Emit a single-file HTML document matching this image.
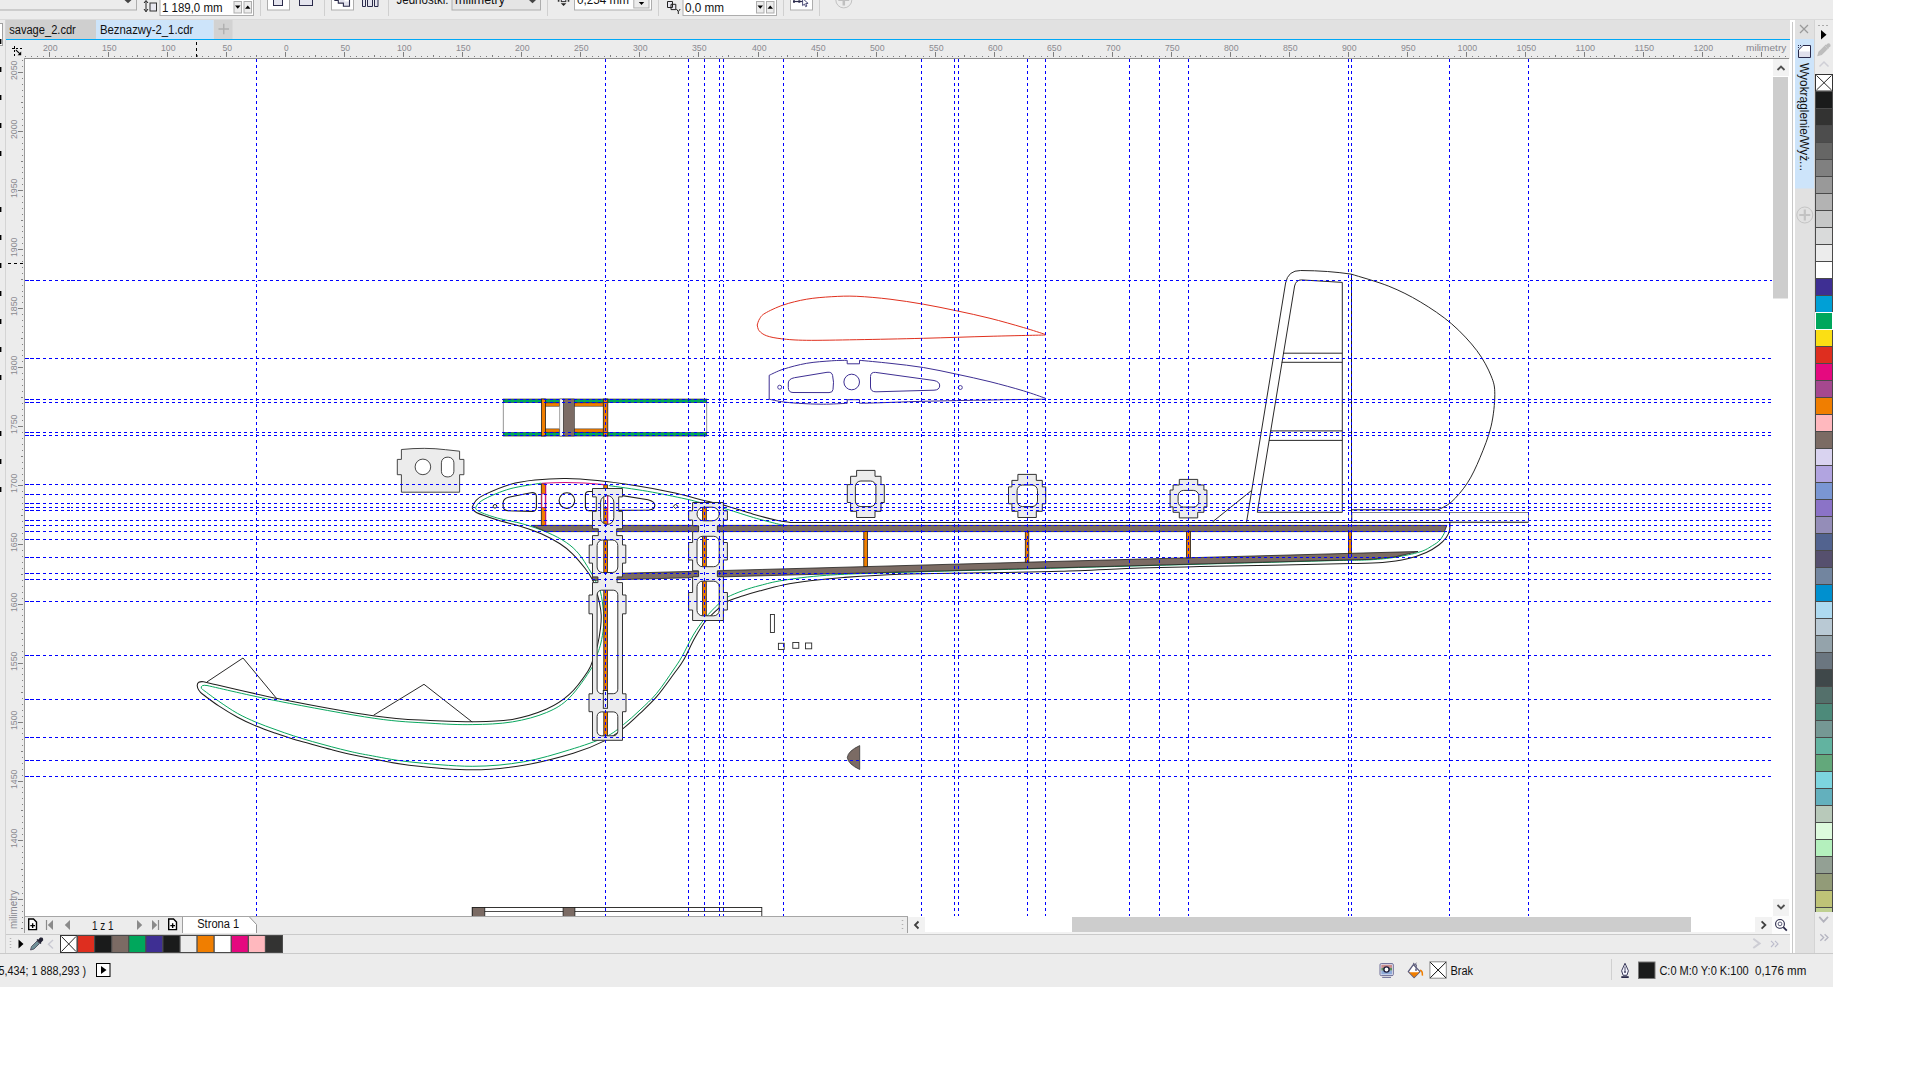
<!DOCTYPE html>
<html><head><meta charset="utf-8"><title>CorelDRAW</title>
<style>html,body{margin:0;padding:0;background:#fff;width:1920px;height:1080px;overflow:hidden}svg{display:block}text{font-family:"Liberation Sans",sans-serif}</style></head>
<body>
<svg width="1920" height="1080" viewBox="0 0 1920 1080" font-family="Liberation Sans, sans-serif">
<rect x="0" y="0" width="1833" height="987" fill="#ececec"/>
<rect x="25" y="59" width="1748" height="857" fill="#fff"/>
<svg x="25" y="59" width="1748" height="857" viewBox="25 59 1748 857" overflow="hidden">
<rect x="472.3" y="907.5" width="289.5" height="10.5" fill="#fff" stroke="#1f1e1d" stroke-width="0.9"/><path d="M472.3 911.5H761.8" stroke="#1f1e1d" stroke-width="0.8" fill="none"/><rect x="472.3" y="907.5" width="12.5" height="10.5" fill="#7b6b64" stroke="#1f1e1d" stroke-width="0.8"/><rect x="563.1" y="907.5" width="11.8" height="10.5" fill="#7b6b64" stroke="#1f1e1d" stroke-width="0.8"/><rect x="503.3" y="399" width="203.4" height="37" fill="#fff" stroke="#8a8a8a" stroke-width="0.9"/><rect x="503.3" y="399.2" width="203.4" height="3.5" fill="#00a75c" stroke="#1f1e1d" stroke-width="0.5"/><rect x="503.3" y="432.4" width="203.4" height="3.5" fill="#00a75c" stroke="#1f1e1d" stroke-width="0.5"/><rect x="545.5" y="402.9" width="14" height="3.3" fill="#f07e00" stroke="#1f1e1d" stroke-width="0.5"/><rect x="574.4" y="402.9" width="28.9" height="3.3" fill="#f07e00" stroke="#1f1e1d" stroke-width="0.5"/><rect x="545.5" y="428.9" width="14" height="3.3" fill="#f07e00" stroke="#1f1e1d" stroke-width="0.5"/><rect x="574.4" y="428.9" width="28.9" height="3.3" fill="#f07e00" stroke="#1f1e1d" stroke-width="0.5"/><rect x="541.5" y="399" width="4" height="37" fill="#f07e00" stroke="#1f1e1d" stroke-width="0.8"/><rect x="603.3" y="399" width="4.5" height="37" fill="#f07e00" stroke="#1f1e1d" stroke-width="0.8"/><rect x="559.8" y="399" width="3.5" height="37" fill="#f4f4f4" stroke="#555" stroke-width="0.5"/><rect x="563.3" y="399" width="11.1" height="37" fill="#7b6b64" stroke="#1f1e1d" stroke-width="0.5"/><path d="M401.4 449.5Q425 447.1 445.6 449.7L459.6 451.2V459.4H463.9V474.7H459.6V492.2H401.4V474.7H397.3V459.4H401.4ZM430.7 466.9A7.8 7.8 0 1 0 415.1 466.9A7.8 7.8 0 1 0 430.7 466.9ZM447 457.2H448.3A5.6 5.6 0 0 1 453.9 462.8V471.3A5.6 5.6 0 0 1 448.3 476.9H447A5.6 5.6 0 0 1 441.4 471.3V462.8A5.6 5.6 0 0 1 447 457.2Z" fill="#ececec" stroke="#333" stroke-width="0.9" fill-rule="evenodd" stroke-linejoin="miter"/><path d="M757.2 325C757.58 324 758.2 320.95 759.5 319C760.8 317.05 761.03 315.63 765 313.3C768.97 310.97 776.35 307.35 783.3 305C790.25 302.65 798.63 300.58 806.7 299.2C814.77 297.82 823.37 297.18 831.7 296.7C840.03 296.22 846.98 295.88 856.7 296.3C866.42 296.72 878.9 297.88 890 299.2C901.1 300.52 912.18 302.27 923.3 304.2C934.42 306.13 945.58 308.45 956.7 310.8C967.82 313.15 978.9 315.52 990 318.3C1001.1 321.08 1014.05 324.8 1023.3 327.5C1032.55 330.2 1041.8 333.33 1045.5 334.5L1045.5 335C1036.25 335.22 1010.37 335.75 990 336.3C969.63 336.85 945.52 337.73 923.3 338.3C901.08 338.87 876.13 339.37 856.7 339.7C837.27 340.03 819.2 340.45 806.7 340.3C794.2 340.15 788.37 339.55 781.7 338.8C775.03 338.05 770.45 337.13 766.7 335.8C762.95 334.47 760.78 332.6 759.2 330.8C757.62 329 757.53 325.97 757.2 325" fill="none" stroke="#e0301e" stroke-width="1"/><path d="M769.2 375.3C771.55 374.28 777.05 371.2 783.3 369.2C789.55 367.2 798.63 364.7 806.7 363.3C814.77 361.9 824.95 361.3 831.7 360.8C838.45 360.3 844.62 360.38 847.2 360.3V363.8H859.5V360.3C864.58 360.8 879.37 362.1 890 363.3C900.63 364.5 912.18 365.68 923.3 367.5C934.42 369.32 945.58 371.83 956.7 374.2C967.82 376.57 978.9 378.93 990 381.7C1001.1 384.47 1014.05 388.03 1023.3 390.8C1032.55 393.57 1041.8 397.05 1045.5 398.3L1045.5 399.2C1036.25 399.33 1010.37 399.65 990 400C969.63 400.35 942.75 400.8 923.3 401.3C903.85 401.8 883.93 402.67 873.3 403C862.67 403.33 861.8 403.25 859.5 403.3V399.7H847.2V403.3C843.22 403.45 831.45 404.2 823.3 404.2C815.15 404.2 805.23 403.72 798.3 403.3C791.37 402.88 786.55 402.38 781.7 401.7C776.85 401.02 771.28 399.62 769.2 399.2Z" fill="none" stroke="#3e2f93" stroke-width="1"/><path d="M781.7 387.2A2 2 0 1 0 777.7 387.2A2 2 0 1 0 781.7 387.2Z" fill="none" stroke="#3e2f93" stroke-width="0.9"/><path d="M962.3 387.5A2 2 0 1 0 958.3 387.5A2 2 0 1 0 962.3 387.5Z" fill="none" stroke="#3e2f93" stroke-width="0.9"/><path d="M859.5 382A7.8 7.8 0 1 0 843.9 382A7.8 7.8 0 1 0 859.5 382Z" fill="none" stroke="#3e2f93" stroke-width="1"/><path d="M794.5 377.7L827 372.3Q832 371.6 832.6 375.5Q834.2 382 833 389.5Q832.6 392.7 829 392.6L793 392.5Q788.3 392.4 788.3 387.5V383Q788.4 378.9 794.5 377.7Z" fill="none" stroke="#3e2f93" stroke-width="1"/><path d="M875.5 372.4L934 380.5Q940 381.8 939.7 386Q939.3 390 934 390.2L876 391.8Q870.6 391.9 870.5 387V376.5Q870.7 371.9 875.5 372.4Z" fill="none" stroke="#3e2f93" stroke-width="1"/><path d="M1246.6 521.8L1285.6 283Q1288 270.3 1300.7 270.5Q1329 270.7 1351.5 274.2C1357.72 276.2 1377.33 281.58 1388.8 286.2C1400.27 290.82 1409.82 295.62 1420.3 301.9C1430.78 308.18 1442.27 315.77 1451.7 323.9C1461.13 332.03 1470.33 342.03 1476.9 350.7C1483.47 359.37 1488.12 368.57 1491.1 375.9C1494.08 383.23 1494.8 386.32 1494.8 394.7C1494.8 403.08 1493.57 415.7 1491.1 426.2C1488.63 436.7 1483.93 448.27 1480 457.7C1476.07 467.13 1472.22 475.47 1467.5 482.8C1462.78 490.13 1456.6 497.2 1451.7 501.7C1446.8 506.2 1440.37 508.45 1438.1 509.8H1351.5" fill="none" stroke="#1f1e1d" stroke-width="0.95"/><path d="M1351.5 274.2V522.3" fill="none" stroke="#1f1e1d" stroke-width="1"/><path d="M1257.3 512.3L1294.6 286Q1296 279.8 1301.5 279.9L1342.3 282.4V512.3Z" fill="none" stroke="#1f1e1d" stroke-width="0.95"/><path d="M1283.2 353.2H1342.3M1281.7 362.3H1342.3M1270.5 430.9H1342.3M1269 440.4H1342.3" fill="none" stroke="#1f1e1d" stroke-width="0.95"/><path d="M1212.6 521.8L1251.3 490.7" fill="none" stroke="#1f1e1d" stroke-width="0.95"/><rect x="1351.9" y="512.5" width="176.6" height="9.7" fill="#fff" stroke="#666" stroke-width="0.8"/><path d="M1449.8 522.3H1528.5" fill="none" stroke="#2a2a2a" stroke-width="0.9"/><path d="M472.1 507.5C472.75 506.33 473.85 502.68 476 500.5C478.15 498.32 479.33 497.08 485 494.4C490.67 491.72 501.67 486.8 510 484.4C518.33 482 525.62 480.98 535 480C544.38 479.02 555.88 478.4 566.3 478.5C576.72 478.6 586.05 479.42 597.5 480.6C608.95 481.78 622.5 483.62 635 485.6C647.5 487.58 661.67 490.2 672.5 492.5C683.33 494.8 691.53 497.32 700 499.4C708.47 501.48 714.42 502.53 723.3 505C732.18 507.47 744.4 511.65 753.3 514.2C762.2 516.75 770.58 518.93 776.7 520.3C782.82 521.67 787.78 522.05 790 522.4H1449.8C1449.77 523.67 1450.18 527.48 1449.6 530C1449.02 532.52 1448.1 535 1446.3 537.5C1444.5 540 1442.13 542.5 1438.8 545C1435.47 547.5 1431.52 550.2 1426.3 552.5C1421.08 554.8 1414.8 557.13 1407.5 558.8C1400.2 560.47 1391.87 561.7 1382.5 562.5C1373.13 563.3 1356.5 563.42 1351.3 563.6C1326.08 564.1 1235.22 565.85 1200 566.6C1164.78 567.35 1163.33 567.32 1140 568.1C1116.67 568.88 1086.67 570.52 1060 571.3C1033.33 572.08 1006.67 572.32 980 572.8C953.33 573.28 922.78 573.42 900 574.2C877.22 574.98 858.3 576.4 843.3 577.5C828.3 578.6 820 579.55 810 580.8C800 582.05 791.63 583.33 783.3 585C774.97 586.67 766.67 589 760 590.8C753.33 592.6 748.85 593.98 743.3 595.8C737.75 597.62 731.42 599.05 726.7 601.7C721.98 604.35 718.62 608.37 715 611.7C711.38 615.03 708.4 617.27 705 621.7C701.6 626.13 698.17 631.92 694.6 638.3C691.03 644.68 686.98 654.17 683.6 660C680.22 665.83 678.78 667.18 674.3 673.3C669.82 679.42 662.42 690.03 656.7 696.7C650.98 703.37 645.57 708.03 640 713.3C634.43 718.57 629.13 723.75 623.3 728.3C617.47 732.85 613.33 736.43 605 740.6C596.67 744.77 586.85 749.2 573.3 753.3C559.75 757.4 540.55 762.45 523.7 765.2C506.85 767.95 491.3 769.8 472.2 769.8C453.1 769.8 426.35 767.17 409.1 765.2C391.85 763.23 378.55 759.83 368.7 758C358.85 756.17 356.25 755.62 350 754.2C343.75 752.78 337.45 751.13 331.2 749.5C324.95 747.87 318.75 746.12 312.5 744.4C306.25 742.68 299.95 741.08 293.7 739.2C287.45 737.32 281.25 735.28 275 733.1C268.75 730.92 262.45 728.75 256.2 726.1C249.95 723.45 243.75 720.57 237.5 717.2C231.25 713.83 224.45 709.68 218.7 705.9C212.95 702.12 205.62 696.4 203 694.5Q197.5 690.5 197.2 685.5Q197.3 681 203.5 681.7C216 684.53 249.95 693 278.5 698.7C307.05 704.4 349.55 712.25 374.8 715.9C400.05 719.55 413.77 719.63 430 720.6C446.23 721.57 458.48 721.9 472.2 721.7C485.92 721.5 499.9 721.5 512.3 719.4C524.7 717.3 537.05 713.3 546.6 709.1C556.15 704.9 562.72 700.52 569.6 694.2C576.48 687.88 583.92 677.23 587.9 671.2C591.88 665.17 591.88 662.37 593.5 658C595.12 653.63 596.43 650 597.6 645C598.77 640 599.9 633 600.5 628C601.1 623 601.37 619.17 601.2 615C601.03 610.83 600.37 607.17 599.5 603C598.63 598.83 597.18 593.92 596 590C594.82 586.08 594.23 583.12 592.4 579.5C590.57 575.88 588.32 572.58 585 568.3C581.68 564.02 576.67 557.88 572.5 553.8C568.33 549.72 565.2 547.13 560 543.8C554.8 540.47 547.55 536.62 541.3 533.8C535.05 530.98 529.8 529.2 522.5 526.9C515.2 524.6 505.2 522.4 497.5 520C489.8 517.6 480.53 514.58 476.3 512.5C472.07 510.42 472.8 508.33 472.1 507.5" fill="none" stroke="#1f1e1d" stroke-width="1.05"/><path d="M207 681.9L243 658L276.2 698" fill="none" stroke="#1f1e1d" stroke-width="0.95"/><path d="M373.6 715.2L424 684.3L472.2 722" fill="none" stroke="#1f1e1d" stroke-width="0.95"/><path d="M541.3 483.1C536.08 484.05 519.38 486.18 510 488.8C500.62 491.42 490.62 495.88 485 498.8C479.38 501.72 477.33 504.22 476.3 506.3C475.27 508.38 475.27 509.33 478.8 511.3C482.33 513.27 490.22 516.02 497.5 518.1C504.78 520.18 514.17 521.4 522.5 523.8C530.83 526.2 540.2 529.38 547.5 532.5C554.8 535.62 561.08 538.95 566.3 542.5C571.52 546.05 575.05 549.42 578.8 553.8C582.55 558.18 586.1 564.43 588.8 568.8C591.5 573.17 593.05 576.13 595 580C596.95 583.87 599.08 586.68 600.5 592C601.92 597.32 603 606 603.5 611.9C604 617.8 603.93 622.22 603.5 627.4C603.07 632.58 601.88 638.67 600.9 643C599.92 647.33 599.12 649.28 597.6 653.4C596.08 657.52 596.47 660.33 591.8 667.7C587.13 675.07 577.13 690.13 569.6 697.6C562.07 705.07 556.15 708.45 546.6 712.5C537.05 716.55 524.7 719.88 512.3 721.9C499.9 723.92 485.92 724.38 472.2 724.6C458.48 724.82 446.23 724.23 430 723.2C413.77 722.17 400.05 722.07 374.8 718.4C349.55 714.73 306.47 706.68 278.5 701.2C250.53 695.72 218.92 688.12 207 685.5Q200.5 684.5 201.3 688.3C201.7 688.63 200.8 688.15 203.7 690.3C206.6 692.45 213.07 697.35 218.7 701.2C224.33 705.05 231.25 709.88 237.5 713.4C243.75 716.92 249.95 719.63 256.2 722.3C262.45 724.97 268.75 727.13 275 729.4C281.25 731.67 287.45 733.87 293.7 735.9C299.95 737.93 306.25 739.8 312.5 741.6C318.75 743.4 324.95 745.07 331.2 746.7C337.45 748.33 343.75 749.98 350 751.4C356.25 752.82 358.85 753.47 368.7 755.2C378.55 756.93 391.85 759.95 409.1 761.8C426.35 763.65 453.1 766.3 472.2 766.3C491.3 766.3 507.47 764.55 523.7 761.8C539.93 759.05 556.05 753.9 569.6 749.8C583.15 745.7 596.05 741.37 605 737.2C613.95 733.03 617.47 729.33 623.3 724.8C629.13 720.27 634.43 715.25 640 710C645.57 704.75 651.15 699.97 656.7 693.3C662.25 686.63 669.08 676.13 673.3 670C677.52 663.87 678.67 662.33 682 656.5C685.33 650.67 689.47 641.37 693.3 635C697.13 628.63 700.83 623.43 705 618.3C709.17 613.17 714.68 607.67 718.3 604.2C721.92 600.73 722.53 599.78 726.7 597.5C730.87 595.22 737.75 592.5 743.3 590.5C748.85 588.5 753.33 587.2 760 585.5C766.67 583.8 772.18 582 783.3 580.3C794.42 578.6 807.25 576.62 826.7 575.3C846.15 573.98 861.12 573.62 900 572.4C938.88 571.18 1010 569.37 1060 568C1110 566.63 1155 565.42 1200 564.2C1245 562.98 1301.67 561.43 1330 560.7C1358.33 559.97 1359.17 560.37 1370 559.8C1380.83 559.23 1386.67 558.62 1395 557.3C1403.33 555.98 1413.75 553.85 1420 551.9C1426.25 549.95 1429.17 547.58 1432.5 545.6C1435.83 543.62 1437.92 542.28 1440 540C1442.08 537.72 1444.17 533.25 1445 531.9" fill="none" stroke="#0aa75f" stroke-width="1"/><path d="M608.8 485.6C615.25 486.55 634.8 489.1 647.5 491.3C660.2 493.5 676.25 496.93 685 498.8C693.75 500.67 693.05 500.77 700 502.5C706.95 504.23 717.82 506.7 726.7 509.2C735.58 511.7 744.97 515.08 753.3 517.5C761.63 519.92 771.7 522.45 776.7 523.7C781.7 524.95 782.2 524.78 783.3 525" fill="none" stroke="#0aa75f" stroke-width="1"/><path d="M496.8 506.3A1.8 1.8 0 1 0 493.2 506.3A1.8 1.8 0 1 0 496.8 506.3Z" fill="none" stroke="#1f1e1d" stroke-width="0.95"/><path d="M675.6 504.1L677.8 506.3L675.6 508.5L673.4 506.3Z" fill="none" stroke="#1f1e1d" stroke-width="0.95"/><path d="M508.5 497.3L531 492.7Q536 492 536.4 496V507Q536.2 511.6 532 511.4L508 510.8Q503.1 510.5 503.1 505.5V503Q503.3 498.6 508.5 497.3Z" fill="none" stroke="#1f1e1d" stroke-width="1.1"/><path d="M574.7 500.6A7.8 7.8 0 1 0 559.1 500.6A7.8 7.8 0 1 0 574.7 500.6Z" fill="none" stroke="#1f1e1d" stroke-width="1.1"/><path d="M588.9 491.5H596.5A3.5 3.5 0 0 1 600 495V507.1A3.5 3.5 0 0 1 596.5 510.6H588.9A3.5 3.5 0 0 1 585.4 507.1V495A3.5 3.5 0 0 1 588.9 491.5Z" fill="none" stroke="#1f1e1d" stroke-width="1.1"/><path d="M616 494.6L648 499.7Q654.8 501.3 654.8 505.3Q654.6 509.8 649 510L616 510.4" fill="none" stroke="#1f1e1d" stroke-width="1.1"/><path d="M531.3 525.4L1446.9 525.4L1444.4 531.6L546.3 531.6Z" fill="#7b6b64" stroke="#1f1e1d" stroke-width="0.8"/><path d="M592.5 574.08L1320 554.18L1380 552.54L1418 551.5L1395 556.9L1370 559.4L1320 560.7L592.5 580.37Z" fill="#7b6b64" stroke="#1f1e1d" stroke-width="0.8"/><rect x="541.3" y="483.8" width="4.3" height="41.5" fill="#f07e00" stroke="#1f1e1d" stroke-width="0.8"/><rect x="541.8" y="493.8" width="3.5" height="13.8" fill="#fff" stroke="#c2185b" stroke-width="0.9"/><rect x="603.8" y="484.8" width="3.7" height="251.2" fill="#f07e00" stroke="#1f1e1d" stroke-width="0.8"/><rect x="604.4" y="495" width="2.8" height="12.5" fill="#fff" stroke="none" stroke-width="0"/><rect x="702.5" y="506" width="3.8" height="110.5" fill="#f07e00" stroke="#1f1e1d" stroke-width="0.8"/><rect x="863.8" y="531.6" width="3.7" height="35.01" fill="#f07e00" stroke="#1f1e1d" stroke-width="0.8"/><rect x="1025.3" y="531.6" width="3.5" height="30.6" fill="#f07e00" stroke="#1f1e1d" stroke-width="0.8"/><rect x="1186.5" y="531.6" width="4.1" height="26.18" fill="#f07e00" stroke="#1f1e1d" stroke-width="0.8"/><rect x="1348.5" y="531.6" width="3" height="21.76" fill="#f07e00" stroke="#1f1e1d" stroke-width="0.8"/><path d="M541.9 483.3Q572.5 481.2 603.8 484.6" fill="none" stroke="#d4147a" stroke-width="1.1"/><path d="M545.7 483.3V525.2M607.7 495V525" fill="none" stroke="#d4147a" stroke-width="1.1"/><path d="M622.5 488.5L622.5 496.9L618.7 496.9L618.7 511.3L622.5 511.3L622.5 528.8L616.7 528.8L616.7 535.6L622.5 535.6L622.5 545L625.8 545L625.8 563.1L622.5 563.1L622.5 576.9L617.1 576.9L617.1 582.6L622.5 582.6L622.5 595L626 595L626 613.8L622.5 613.8L622.5 693.8L626 693.8L626 711.7L622.5 711.7L622.5 740.3L592.5 740.3L592.5 711.7L589 711.7L589 693.8L592.5 693.8L592.5 613.8L589 613.8L589 595L592.5 595L592.5 582.6L597.9 582.6L597.9 576.9L592.5 576.9L592.5 563.1L589.2 563.1L589.2 545L592.5 545L592.5 535.6L598.3 535.6L598.3 528.8L592.5 528.8L592.5 511.3L596.3 511.3L596.3 496.9L592.5 496.9L592.5 488.5ZM607.2 495.6H607.2A6.6 6.6 0 0 1 613.8 502.2V517.8A6.6 6.6 0 0 1 607.2 524.4H607.2A6.6 6.6 0 0 1 600.6 517.8V502.2A6.6 6.6 0 0 1 607.2 495.6ZM602.6 540H612.3A5.5 5.5 0 0 1 617.8 545.5V567A5.5 5.5 0 0 1 612.3 572.5H602.6A5.5 5.5 0 0 1 597.1 567V545.5A5.5 5.5 0 0 1 602.6 540ZM601.6 590.2H613.3A4.5 4.5 0 0 1 617.8 594.7V689.2A4.5 4.5 0 0 1 613.3 693.7H601.6A4.5 4.5 0 0 1 597.1 689.2V594.7A4.5 4.5 0 0 1 601.6 590.2ZM601.6 711.9H613.3A4.5 4.5 0 0 1 617.8 716.4V731.3A4.5 4.5 0 0 1 613.3 735.8H601.6A4.5 4.5 0 0 1 597.1 731.3V716.4A4.5 4.5 0 0 1 601.6 711.9Z" fill="#ececec" stroke="#333" stroke-width="1" fill-rule="evenodd"/><rect x="603.3" y="690.5" width="4.2" height="17.8" fill="#ececec" stroke="#222" stroke-width="0.9"/><path d="M723.4 502.5L723.4 510.8L727.4 510.8L727.4 520L723.4 520L723.4 525.8L717.4 525.8L717.4 531.7L723.4 531.7L723.4 542.5L727.4 542.5L727.4 560L723.4 560L723.4 570.8L717.4 570.8L717.4 576.7L723.4 576.7L723.4 592.5L727.4 592.5L727.4 610L723.4 610L723.4 620.5L692.6 620.5L692.6 610L688.6 610L688.6 592.5L692.6 592.5L692.6 576.7L698.6 576.7L698.6 570.8L692.6 570.8L692.6 560L688.6 560L688.6 542.5L692.6 542.5L692.6 531.7L698.6 531.7L698.6 525.8L692.6 525.8L692.6 520L688.6 520L688.6 510.8L692.6 510.8L692.6 502.5ZM703.8 507.2H712.4A6.8 6.8 0 0 1 719.2 514V514A6.8 6.8 0 0 1 712.4 520.8H703.8A6.8 6.8 0 0 1 697 514V514A6.8 6.8 0 0 1 703.8 507.2ZM702.5 536.3H713.7A5.5 5.5 0 0 1 719.2 541.8V561.2A5.5 5.5 0 0 1 713.7 566.7H702.5A5.5 5.5 0 0 1 697 561.2V541.8A5.5 5.5 0 0 1 702.5 536.3ZM702.5 581.2H713.7A5.5 5.5 0 0 1 719.2 586.7V610.3A5.5 5.5 0 0 1 713.7 615.8H702.5A5.5 5.5 0 0 1 697 610.3V586.7A5.5 5.5 0 0 1 702.5 581.2Z" fill="#ececec" stroke="#333" stroke-width="1" fill-rule="evenodd"/><path d="M875 470.4L875 476.3L881 476.3L881 484.6L884.3 484.6L884.3 502.5L881 502.5L881 511.3L875 511.3L875 517.5L856.6 517.5L856.6 511.3L850.6 511.3L850.6 502.5L847.3 502.5L847.3 484.6L850.6 484.6L850.6 476.3L856.6 476.3L856.6 470.4ZM860.9 481H870.4A5.5 5.5 0 0 1 875.9 486.5V501.1A5.5 5.5 0 0 1 870.4 506.6H860.9A5.5 5.5 0 0 1 855.4 501.1V486.5A5.5 5.5 0 0 1 860.9 481Z" fill="#ececec" stroke="#333" stroke-width="1" fill-rule="evenodd"/><path d="M1036.3 474.4L1036.3 480.4L1042.3 480.4L1042.3 486.9L1045.7 486.9L1045.7 503.8L1042.3 503.8L1042.3 511.3L1036.3 511.3L1036.3 517.5L1017.9 517.5L1017.9 511.3L1011.9 511.3L1011.9 503.8L1008.5 503.8L1008.5 486.9L1011.9 486.9L1011.9 480.4L1017.9 480.4L1017.9 474.4ZM1022.6 485H1032A5.5 5.5 0 0 1 1037.5 490.5V501.1A5.5 5.5 0 0 1 1032 506.6H1022.6A5.5 5.5 0 0 1 1017.1 501.1V490.5A5.5 5.5 0 0 1 1022.6 485Z" fill="#ececec" stroke="#333" stroke-width="1" fill-rule="evenodd"/><path d="M1197.7 479.4L1197.7 485L1203.9 485L1203.9 490L1206.9 490L1206.9 506.9L1203.9 506.9L1203.9 512.3L1197.7 512.3L1197.7 517.9L1179.3 517.9L1179.3 512.3L1173.1 512.3L1173.1 506.9L1170.1 506.9L1170.1 490L1173.1 490L1173.1 485L1179.3 485L1179.3 479.4ZM1183.6 490.4H1193.3A5.5 5.5 0 0 1 1198.8 495.9V501.6A5.5 5.5 0 0 1 1193.3 507.1H1183.6A5.5 5.5 0 0 1 1178.1 501.6V495.9A5.5 5.5 0 0 1 1183.6 490.4Z" fill="#ececec" stroke="#333" stroke-width="1" fill-rule="evenodd"/><rect x="770.4" y="614.5" width="4" height="18" fill="#fff" stroke="#2a2a2a" stroke-width="0.9"/><rect x="778.4" y="643.3" width="5.8" height="6.2" fill="#fff" stroke="#2a2a2a" stroke-width="0.9"/><rect x="792.8" y="642.5" width="6" height="5.8" fill="#fff" stroke="#2a2a2a" stroke-width="0.9"/><rect x="805.5" y="643" width="6.2" height="5.8" fill="#fff" stroke="#2a2a2a" stroke-width="0.9"/><path d="M859.7 745.6V769.5Q848 764 847.3 757.5Q848 751 859.7 745.6Z" fill="#7b6b64" stroke="#333" stroke-width="0.8"/>
<g stroke="#0000ff" stroke-width="1" shape-rendering="crispEdges" fill="none"><path d="M256.5 59V281M256.5 284V916M605.5 59V281M605.5 284V916M688.5 59V281M688.5 284V916M704.5 59V281M704.5 284V916M719.5 59V281M719.5 284V916M723.5 59V281M723.5 284V916M783.5 59V281M783.5 284V916M921.5 59V281M921.5 284V916M954.5 59V281M954.5 284V916M958.5 59V281M958.5 284V916M1027.5 59V281M1027.5 284V916M1045.5 59V281M1045.5 284V916M1129.5 59V281M1129.5 284V916M1159.5 59V281M1159.5 284V916M1188.5 59V281M1188.5 284V916M1348.5 59V281M1348.5 284V916M1351.5 59V281M1351.5 284V916M1449.5 59V281M1449.5 284V916M1528.5 59V281M1528.5 284V916" stroke-dasharray="3 3"/><path d="M256.5 281v1M605.5 281v1M688.5 281v1M704.5 281v1M719.5 281v1M723.5 281v1M783.5 281v1M921.5 281v1M954.5 281v1M958.5 281v1M1027.5 281v1M1045.5 281v1M1129.5 281v1M1159.5 281v1M1188.5 281v1M1348.5 281v1M1351.5 281v1M1449.5 281v1M1528.5 281v1"/><path d="M84 280.5H1772M76 358.5H1772M76 399.5H1772M76 402.5H1772M76 432.5H1772M76 435.5H1772M76 484.5H1772M76 494.5H1772M76 503.5H1772M76 507.5H1772M76 510.5H1772M76 520.5H1772M76 525.5H1772M76 531.5H1772M76 539.5H1772M76 557.5H1772M76 573.5H1772M76 579.5H1772M76 601.5H1772M76 655.5H1772M76 699.5H1772M76 737.5H1772M76 760.5H1772M76 776.5H1772" stroke-dasharray="3 3"/><path d="M25 280.5h4m1 0h4m2 0h4m3 0h3m3 0h3m3 0h3m3 0h3m3 0h3m1 0h4m2 0h4M25 358.5h4m1 0h4m2 0h4m3 0h3m3 0h3m3 0h3m3 0h3m3 0h3m1 0h2M25 399.5h4m1 0h4m2 0h4m3 0h3m3 0h3m3 0h3m3 0h3m3 0h3m1 0h2M25 402.5h4m1 0h4m2 0h4m3 0h3m3 0h3m3 0h3m3 0h3m3 0h3m1 0h2M25 432.5h4m1 0h4m2 0h4m3 0h3m3 0h3m3 0h3m3 0h3m3 0h3m1 0h2M25 435.5h4m1 0h4m2 0h4m3 0h3m3 0h3m3 0h3m3 0h3m3 0h3m1 0h2M25 484.5h4m1 0h4m2 0h4m3 0h3m3 0h3m3 0h3m3 0h3m3 0h3m1 0h2M25 494.5h4m1 0h4m2 0h4m3 0h3m3 0h3m3 0h3m3 0h3m3 0h3m1 0h2M25 503.5h4m1 0h4m2 0h4m3 0h3m3 0h3m3 0h3m3 0h3m3 0h3m1 0h2M25 507.5h4m1 0h4m2 0h4m3 0h3m3 0h3m3 0h3m3 0h3m3 0h3m1 0h2M25 510.5h4m1 0h4m2 0h4m3 0h3m3 0h3m3 0h3m3 0h3m3 0h3m1 0h2M25 520.5h4m1 0h4m2 0h4m3 0h3m3 0h3m3 0h3m3 0h3m3 0h3m1 0h2M25 525.5h4m1 0h4m2 0h4m3 0h3m3 0h3m3 0h3m3 0h3m3 0h3m1 0h2M25 531.5h4m1 0h4m2 0h4m3 0h3m3 0h3m3 0h3m3 0h3m3 0h3m1 0h2M25 539.5h4m1 0h4m2 0h4m3 0h3m3 0h3m3 0h3m3 0h3m3 0h3m1 0h2M25 557.5h4m1 0h4m2 0h4m3 0h3m3 0h3m3 0h3m3 0h3m3 0h3m1 0h2M25 573.5h4m1 0h4m2 0h4m3 0h3m3 0h3m3 0h3m3 0h3m3 0h3m1 0h2M25 579.5h4m1 0h4m2 0h4m3 0h3m3 0h3m3 0h3m3 0h3m3 0h3m1 0h2M25 601.5h4m1 0h4m2 0h4m3 0h3m3 0h3m3 0h3m3 0h3m3 0h3m1 0h2M25 655.5h4m1 0h4m2 0h4m3 0h3m3 0h3m3 0h3m3 0h3m3 0h3m1 0h2M25 699.5h4m1 0h4m2 0h4m3 0h3m3 0h3m3 0h3m3 0h3m3 0h3m1 0h2M25 737.5h4m1 0h4m2 0h4m3 0h3m3 0h3m3 0h3m3 0h3m3 0h3m1 0h2M25 760.5h4m1 0h4m2 0h4m3 0h3m3 0h3m3 0h3m3 0h3m3 0h3m1 0h2M25 776.5h4m1 0h4m2 0h4m3 0h3m3 0h3m3 0h3m3 0h3m3 0h3m1 0h2"/></g>
</svg>
<path d="M24.5 58V933" stroke="#9a9a9a" stroke-width="1" shape-rendering="crispEdges"/>
<path d="M24 58.5H1789" stroke="#8e8e8e" stroke-width="1" shape-rendering="crispEdges"/>
<rect x="0" y="19" width="1833" height="20" fill="#e1e1e1"/><path d="M0 19.5H1833" stroke="#dadada" stroke-width="1" shape-rendering="crispEdges"/><rect x="6" y="20" width="90" height="19" fill="#cfcfcf"/><rect x="96" y="20" width="117.5" height="19" fill="#cde4fa"/><rect x="214" y="20" width="18.5" height="19" fill="#d2d2d2"/><text x="9.2" y="33.5" font-size="12" fill="#111" textLength="66.6" lengthAdjust="spacingAndGlyphs">savage_2.cdr</text><text x="100" y="33.5" font-size="12" fill="#111" textLength="93.3" lengthAdjust="spacingAndGlyphs">Beznazwy-2_1.cdr</text><path d="M218.5 29H229M223.75 23.8V34.2" stroke="#b0b0b0" stroke-width="1.4"/><path d="M6 39.5H1790" stroke="#00a8f6" stroke-width="1" shape-rendering="crispEdges"/>
<rect x="-1.5" y="-4.5" width="138" height="14.5" fill="#ececec" stroke="#adadad" stroke-width="1"/><path d="M124.5 0H131.5L128 3.3Z" fill="#444"/><path d="M146 1V11.5M144 9L146 11.8L148 9M144 3L146 0.5L148 3" stroke="#222" stroke-width="1" fill="none"/><rect x="150" y="3" width="6.5" height="8" fill="#e8e8f0" stroke="#333" stroke-width="1"/><rect x="160" y="-4.5" width="93.5" height="20" fill="#fff" stroke="#adadad" stroke-width="1"/><text x="162" y="12" font-size="12.5" fill="#111" textLength="60.5" lengthAdjust="spacingAndGlyphs">1 189,0 mm</text><rect x="234" y="1.5" width="7.5" height="11.5" fill="#ececec" stroke="#adadad" stroke-width="1"/><rect x="244" y="1.5" width="7.5" height="11.5" fill="#ececec" stroke="#adadad" stroke-width="1"/><path d="M235 5.5H240.5L237.75 8.7Z" fill="#000"/><path d="M245 8.7H250.5L247.75 5.5Z" fill="#000"/><path d="M260.5 0V16" stroke="#d0d0d0" stroke-width="1" shape-rendering="crispEdges"/><rect x="267.5" y="-4.5" width="22" height="14.5" fill="#fff" stroke="#adadad" stroke-width="1"/><rect x="273.5" y="-4.5" width="9" height="10" fill="#e4e4ee" stroke="#2a2a4a" stroke-width="1"/><rect x="299.5" y="-4.5" width="13" height="10" fill="#e4e4ee" stroke="#2a2a4a" stroke-width="1"/><path d="M324.5 0V16" stroke="#d0d0d0" stroke-width="1" shape-rendering="crispEdges"/><rect x="331.5" y="-4.5" width="22" height="14.5" fill="#fff" stroke="#adadad" stroke-width="1"/><rect x="344" y="1.5" width="5" height="4.5" fill="#e0e0ec"/><rect x="339.5" y="-1" width="5" height="3.5" fill="#e0e0ec"/><path d="M334.3 0.4H338.3V3.1H343.4V6.3H349.5V-1" stroke="#2a2a4a" stroke-width="1.1" fill="none"/><path d="M362.5 0V6.5H365.5V0M367.5 0V6.5H372.5V0M374.5 0V6.5H378V0" stroke="#2a2a4a" stroke-width="1" fill="#e4e4ee"/><path d="M388.5 0V16" stroke="#d0d0d0" stroke-width="1" shape-rendering="crispEdges"/><text x="396.5" y="3.7" font-size="12.5" fill="#111" textLength="52" lengthAdjust="spacingAndGlyphs">Jednostki:</text><rect x="452" y="-4.5" width="88.5" height="14.5" fill="#e5e5e5" stroke="#adadad" stroke-width="1"/><text x="455" y="3.7" font-size="12.5" fill="#111" textLength="50" lengthAdjust="spacingAndGlyphs">milimetry</text><path d="M529 0H536L532.5 3.3Z" fill="#444"/><path d="M547.5 0V16" stroke="#d0d0d0" stroke-width="1" shape-rendering="crispEdges"/><path d="M560.8 3.3H566.3L563.55 6Z" fill="#222"/><rect x="561.3" y="-3" width="4.5" height="4.6" fill="#e8e8f0" stroke="#333" stroke-width="1"/><path d="M558.6 0V1.8M568.5 0V1.8" stroke="#333" stroke-width="1.6"/><rect x="574.5" y="-4.5" width="77" height="14.5" fill="#fff" stroke="#adadad" stroke-width="1"/><text x="577" y="3.7" font-size="12.5" fill="#111" textLength="52" lengthAdjust="spacingAndGlyphs">0,254 mm</text><rect x="633.8" y="-4.5" width="15.2" height="12.5" fill="#ececec" stroke="#adadad" stroke-width="1"/><path d="M638.8 2.1H644.2L641.5 5.1Z" fill="#000"/><path d="M658.5 0V16" stroke="#d0d0d0" stroke-width="1" shape-rendering="crispEdges"/><path d="M667.5 1.5H672.5V7.5H667.5ZM671 4.3H675.8V9.6H671Z" fill="#e8e8f0" stroke="#222" stroke-width="1"/><path d="M676.4 9L678.3 11.6L680.2 9M678.3 11.6V14" stroke="#222" stroke-width="1" fill="none"/><rect x="683" y="-4.5" width="93.5" height="20" fill="#fff" stroke="#adadad" stroke-width="1"/><text x="685" y="12" font-size="12.5" fill="#111" textLength="39" lengthAdjust="spacingAndGlyphs">0,0 mm</text><rect x="756.5" y="1.5" width="7.5" height="11.5" fill="#ececec" stroke="#adadad" stroke-width="1"/><rect x="766.5" y="1.5" width="7.5" height="11.5" fill="#ececec" stroke="#adadad" stroke-width="1"/><path d="M757.5 5.5H763L760.25 8.7Z" fill="#000"/><path d="M767.5 8.7H773L770.25 5.5Z" fill="#000"/><path d="M783.5 0V16" stroke="#d0d0d0" stroke-width="1" shape-rendering="crispEdges"/><rect x="790.5" y="-4.5" width="22" height="14.5" fill="#fff" stroke="#adadad" stroke-width="1"/><path d="M793.5 1.5H803" stroke="#2a2a4a" stroke-width="1.2"/><rect x="793" y="0.3" width="2" height="2.4" fill="#2a2a4a"/><rect x="798.3" y="0.3" width="2" height="2.4" fill="#2a2a4a"/><path d="M802.6 -1.5V5.6L804.4 4.1L805.7 6.7L806.9 6.1L805.7 3.6L808.1 3.4Z" fill="#fff" stroke="#3a3a6a" stroke-width="0.9"/><path d="M819.5 0V16" stroke="#d0d0d0" stroke-width="1" shape-rendering="crispEdges"/><circle cx="843.8" cy="-0.1" r="8" fill="none" stroke="#c2c2c2" stroke-width="1"/><path d="M843.8 -6V5.4M838.3 -0.3H849.2" stroke="#c0c0c0" stroke-width="2.5"/>
<path d="M49.5 52V57M108.5 52V57M167.5 52V57M226.5 52V57M285.5 52V57M344.5 52V57M403.5 52V57M462.5 52V57M521.5 52V57M580.5 52V57M639.5 52V57M698.5 52V57M758.5 52V57M817.5 52V57M876.5 52V57M935.5 52V57M994.5 52V57M1053.5 52V57M1112.5 52V57M1171.5 52V57M1230.5 52V57M1289.5 52V57M1348.5 52V57M1407.5 52V57M1466.5 52V57M1525.5 52V57M1584.5 52V57M1643.5 52V57M1702.5 52V57M1761.5 52V57M78.5 55V57M137.5 55V57M197.5 55V57M256.5 55V57M315.5 55V57M374.5 55V57M433.5 55V57M492.5 55V57M551.5 55V57M610.5 55V57M669.5 55V57M728.5 55V57M787.5 55V57M846.5 55V57M905.5 55V57M964.5 55V57M1023.5 55V57M1082.5 55V57M1141.5 55V57M1200.5 55V57M1260.5 55V57M1319.5 55V57M1378.5 55V57M1437.5 55V57M1496.5 55V57M1555.5 55V57M1614.5 55V57M1673.5 55V57M1732.5 55V57M25.5 56V57M31.5 56V57M37.5 56V57M43.5 56V57M55.5 56V57M61.5 56V57M67.5 56V57M73.5 56V57M84.5 56V57M90.5 56V57M96.5 56V57M102.5 56V57M114.5 56V57M120.5 56V57M126.5 56V57M132.5 56V57M143.5 56V57M149.5 56V57M155.5 56V57M161.5 56V57M173.5 56V57M179.5 56V57M185.5 56V57M191.5 56V57M202.5 56V57M208.5 56V57M214.5 56V57M220.5 56V57M232.5 56V57M238.5 56V57M244.5 56V57M250.5 56V57M261.5 56V57M267.5 56V57M273.5 56V57M279.5 56V57M291.5 56V57M297.5 56V57M303.5 56V57M309.5 56V57M321.5 56V57M326.5 56V57M332.5 56V57M338.5 56V57M350.5 56V57M356.5 56V57M362.5 56V57M368.5 56V57M380.5 56V57M385.5 56V57M391.5 56V57M397.5 56V57M409.5 56V57M415.5 56V57M421.5 56V57M427.5 56V57M439.5 56V57M445.5 56V57M450.5 56V57M456.5 56V57M468.5 56V57M474.5 56V57M480.5 56V57M486.5 56V57M498.5 56V57M504.5 56V57M510.5 56V57M515.5 56V57M527.5 56V57M533.5 56V57M539.5 56V57M545.5 56V57M557.5 56V57M563.5 56V57M569.5 56V57M574.5 56V57M586.5 56V57M592.5 56V57M598.5 56V57M604.5 56V57M616.5 56V57M622.5 56V57M628.5 56V57M634.5 56V57M645.5 56V57M651.5 56V57M657.5 56V57M663.5 56V57M675.5 56V57M681.5 56V57M687.5 56V57M693.5 56V57M704.5 56V57M710.5 56V57M716.5 56V57M722.5 56V57M734.5 56V57M740.5 56V57M746.5 56V57M752.5 56V57M763.5 56V57M769.5 56V57M775.5 56V57M781.5 56V57M793.5 56V57M799.5 56V57M805.5 56V57M811.5 56V57M823.5 56V57M828.5 56V57M834.5 56V57M840.5 56V57M852.5 56V57M858.5 56V57M864.5 56V57M870.5 56V57M882.5 56V57M887.5 56V57M893.5 56V57M899.5 56V57M911.5 56V57M917.5 56V57M923.5 56V57M929.5 56V57M941.5 56V57M947.5 56V57M952.5 56V57M958.5 56V57M970.5 56V57M976.5 56V57M982.5 56V57M988.5 56V57M1000.5 56V57M1006.5 56V57M1011.5 56V57M1017.5 56V57M1029.5 56V57M1035.5 56V57M1041.5 56V57M1047.5 56V57M1059.5 56V57M1065.5 56V57M1071.5 56V57M1076.5 56V57M1088.5 56V57M1094.5 56V57M1100.5 56V57M1106.5 56V57M1118.5 56V57M1124.5 56V57M1130.5 56V57M1135.5 56V57M1147.5 56V57M1153.5 56V57M1159.5 56V57M1165.5 56V57M1177.5 56V57M1183.5 56V57M1189.5 56V57M1195.5 56V57M1206.5 56V57M1212.5 56V57M1218.5 56V57M1224.5 56V57M1236.5 56V57M1242.5 56V57M1248.5 56V57M1254.5 56V57M1265.5 56V57M1271.5 56V57M1277.5 56V57M1283.5 56V57M1295.5 56V57M1301.5 56V57M1307.5 56V57M1313.5 56V57M1324.5 56V57M1330.5 56V57M1336.5 56V57M1342.5 56V57M1354.5 56V57M1360.5 56V57M1366.5 56V57M1372.5 56V57M1384.5 56V57M1389.5 56V57M1395.5 56V57M1401.5 56V57M1413.5 56V57M1419.5 56V57M1425.5 56V57M1431.5 56V57M1443.5 56V57M1448.5 56V57M1454.5 56V57M1460.5 56V57M1472.5 56V57M1478.5 56V57M1484.5 56V57M1490.5 56V57M1502.5 56V57M1508.5 56V57M1513.5 56V57M1519.5 56V57M1531.5 56V57M1537.5 56V57M1543.5 56V57M1549.5 56V57M1561.5 56V57M1567.5 56V57M1573.5 56V57M1578.5 56V57M1590.5 56V57M1596.5 56V57M1602.5 56V57M1608.5 56V57M1620.5 56V57M1626.5 56V57M1632.5 56V57M1637.5 56V57M1649.5 56V57M1655.5 56V57M1661.5 56V57M1667.5 56V57M1679.5 56V57M1685.5 56V57M1691.5 56V57M1697.5 56V57M1708.5 56V57M1714.5 56V57M1720.5 56V57M1726.5 56V57M1738.5 56V57M1744.5 56V57M1750.5 56V57M1756.5 56V57M1767.5 56V57M1773.5 56V57M1779.5 56V57M1785.5 56V57" stroke="#7f7f7f" stroke-width="1" fill="none" shape-rendering="crispEdges"/><text x="50.3" y="50.9" font-size="9.6" fill="#8a8a90" textLength="14.6" lengthAdjust="spacingAndGlyphs" text-anchor="middle">200</text><text x="109.3" y="50.9" font-size="9.6" fill="#8a8a90" textLength="14.6" lengthAdjust="spacingAndGlyphs" text-anchor="middle">150</text><text x="168.3" y="50.9" font-size="9.6" fill="#8a8a90" textLength="14.6" lengthAdjust="spacingAndGlyphs" text-anchor="middle">100</text><text x="227.3" y="50.9" font-size="9.6" fill="#8a8a90" textLength="9.6" lengthAdjust="spacingAndGlyphs" text-anchor="middle">50</text><text x="286.3" y="50.9" font-size="9.6" fill="#8a8a90" textLength="4.6" lengthAdjust="spacingAndGlyphs" text-anchor="middle">0</text><text x="345.3" y="50.9" font-size="9.6" fill="#8a8a90" textLength="9.6" lengthAdjust="spacingAndGlyphs" text-anchor="middle">50</text><text x="404.3" y="50.9" font-size="9.6" fill="#8a8a90" textLength="14.6" lengthAdjust="spacingAndGlyphs" text-anchor="middle">100</text><text x="463.3" y="50.9" font-size="9.6" fill="#8a8a90" textLength="14.6" lengthAdjust="spacingAndGlyphs" text-anchor="middle">150</text><text x="522.3" y="50.9" font-size="9.6" fill="#8a8a90" textLength="14.6" lengthAdjust="spacingAndGlyphs" text-anchor="middle">200</text><text x="581.3" y="50.9" font-size="9.6" fill="#8a8a90" textLength="14.6" lengthAdjust="spacingAndGlyphs" text-anchor="middle">250</text><text x="640.3" y="50.9" font-size="9.6" fill="#8a8a90" textLength="14.6" lengthAdjust="spacingAndGlyphs" text-anchor="middle">300</text><text x="699.3" y="50.9" font-size="9.6" fill="#8a8a90" textLength="14.6" lengthAdjust="spacingAndGlyphs" text-anchor="middle">350</text><text x="759.3" y="50.9" font-size="9.6" fill="#8a8a90" textLength="14.6" lengthAdjust="spacingAndGlyphs" text-anchor="middle">400</text><text x="818.3" y="50.9" font-size="9.6" fill="#8a8a90" textLength="14.6" lengthAdjust="spacingAndGlyphs" text-anchor="middle">450</text><text x="877.3" y="50.9" font-size="9.6" fill="#8a8a90" textLength="14.6" lengthAdjust="spacingAndGlyphs" text-anchor="middle">500</text><text x="936.3" y="50.9" font-size="9.6" fill="#8a8a90" textLength="14.6" lengthAdjust="spacingAndGlyphs" text-anchor="middle">550</text><text x="995.3" y="50.9" font-size="9.6" fill="#8a8a90" textLength="14.6" lengthAdjust="spacingAndGlyphs" text-anchor="middle">600</text><text x="1054.3" y="50.9" font-size="9.6" fill="#8a8a90" textLength="14.6" lengthAdjust="spacingAndGlyphs" text-anchor="middle">650</text><text x="1113.3" y="50.9" font-size="9.6" fill="#8a8a90" textLength="14.6" lengthAdjust="spacingAndGlyphs" text-anchor="middle">700</text><text x="1172.3" y="50.9" font-size="9.6" fill="#8a8a90" textLength="14.6" lengthAdjust="spacingAndGlyphs" text-anchor="middle">750</text><text x="1231.3" y="50.9" font-size="9.6" fill="#8a8a90" textLength="14.6" lengthAdjust="spacingAndGlyphs" text-anchor="middle">800</text><text x="1290.3" y="50.9" font-size="9.6" fill="#8a8a90" textLength="14.6" lengthAdjust="spacingAndGlyphs" text-anchor="middle">850</text><text x="1349.3" y="50.9" font-size="9.6" fill="#8a8a90" textLength="14.6" lengthAdjust="spacingAndGlyphs" text-anchor="middle">900</text><text x="1408.3" y="50.9" font-size="9.6" fill="#8a8a90" textLength="14.6" lengthAdjust="spacingAndGlyphs" text-anchor="middle">950</text><text x="1467.3" y="50.9" font-size="9.6" fill="#8a8a90" textLength="19.6" lengthAdjust="spacingAndGlyphs" text-anchor="middle">1000</text><text x="1526.3" y="50.9" font-size="9.6" fill="#8a8a90" textLength="19.6" lengthAdjust="spacingAndGlyphs" text-anchor="middle">1050</text><text x="1585.3" y="50.9" font-size="9.6" fill="#8a8a90" textLength="19.6" lengthAdjust="spacingAndGlyphs" text-anchor="middle">1100</text><text x="1644.3" y="50.9" font-size="9.6" fill="#8a8a90" textLength="19.6" lengthAdjust="spacingAndGlyphs" text-anchor="middle">1150</text><text x="1703.3" y="50.9" font-size="9.6" fill="#8a8a90" textLength="19.6" lengthAdjust="spacingAndGlyphs" text-anchor="middle">1200</text><text x="1786.3" y="51.2" font-size="9.6" fill="#85858c" textLength="40.3" lengthAdjust="spacingAndGlyphs" text-anchor="end">milimetry</text><path d="M18 72.5H23M18 131.5H23M18 190.5H23M18 249.5H23M18 308.5H23M18 367.5H23M18 426.5H23M18 485.5H23M18 544.5H23M18 604.5H23M18 663.5H23M18 722.5H23M18 781.5H23M18 840.5H23M18 899.5H23M21 102.5H23M21 161.5H23M21 220.5H23M21 279.5H23M21 338.5H23M21 397.5H23M21 456.5H23M21 515.5H23M21 574.5H23M21 633.5H23M21 692.5H23M21 751.5H23M21 810.5H23M21 869.5H23M21 928.5H23M22 60.5H23M22 66.5H23M22 78.5H23M22 84.5H23M22 90.5H23M22 96.5H23M22 107.5H23M22 113.5H23M22 119.5H23M22 125.5H23M22 137.5H23M22 143.5H23M22 149.5H23M22 155.5H23M22 167.5H23M22 172.5H23M22 178.5H23M22 184.5H23M22 196.5H23M22 202.5H23M22 208.5H23M22 214.5H23M22 226.5H23M22 231.5H23M22 237.5H23M22 243.5H23M22 255.5H23M22 261.5H23M22 267.5H23M22 273.5H23M22 285.5H23M22 291.5H23M22 296.5H23M22 302.5H23M22 314.5H23M22 320.5H23M22 326.5H23M22 332.5H23M22 344.5H23M22 350.5H23M22 355.5H23M22 361.5H23M22 373.5H23M22 379.5H23M22 385.5H23M22 391.5H23M22 403.5H23M22 409.5H23M22 415.5H23M22 420.5H23M22 432.5H23M22 438.5H23M22 444.5H23M22 450.5H23M22 462.5H23M22 468.5H23M22 474.5H23M22 480.5H23M22 491.5H23M22 497.5H23M22 503.5H23M22 509.5H23M22 521.5H23M22 527.5H23M22 533.5H23M22 539.5H23M22 550.5H23M22 556.5H23M22 562.5H23M22 568.5H23M22 580.5H23M22 586.5H23M22 592.5H23M22 598.5H23M22 609.5H23M22 615.5H23M22 621.5H23M22 627.5H23M22 639.5H23M22 645.5H23M22 651.5H23M22 657.5H23M22 668.5H23M22 674.5H23M22 680.5H23M22 686.5H23M22 698.5H23M22 704.5H23M22 710.5H23M22 716.5H23M22 728.5H23M22 733.5H23M22 739.5H23M22 745.5H23M22 757.5H23M22 763.5H23M22 769.5H23M22 775.5H23M22 787.5H23M22 792.5H23M22 798.5H23M22 804.5H23M22 816.5H23M22 822.5H23M22 828.5H23M22 834.5H23M22 846.5H23M22 852.5H23M22 857.5H23M22 863.5H23M22 875.5H23M22 881.5H23M22 887.5H23M22 893.5H23M22 905.5H23M22 911.5H23M22 917.5H23M22 922.5H23" stroke="#7f7f7f" stroke-width="1" fill="none" shape-rendering="crispEdges"/><text transform="translate(17.2 80) rotate(-90)" font-size="9.9" fill="#8a8a90" textLength="19.4" lengthAdjust="spacingAndGlyphs">2050</text><text transform="translate(17.2 139) rotate(-90)" font-size="9.9" fill="#8a8a90" textLength="19.4" lengthAdjust="spacingAndGlyphs">2000</text><text transform="translate(17.2 198) rotate(-90)" font-size="9.9" fill="#8a8a90" textLength="19.4" lengthAdjust="spacingAndGlyphs">1950</text><text transform="translate(17.2 257) rotate(-90)" font-size="9.9" fill="#8a8a90" textLength="19.4" lengthAdjust="spacingAndGlyphs">1900</text><text transform="translate(17.2 316) rotate(-90)" font-size="9.9" fill="#8a8a90" textLength="19.4" lengthAdjust="spacingAndGlyphs">1850</text><text transform="translate(17.2 375) rotate(-90)" font-size="9.9" fill="#8a8a90" textLength="19.4" lengthAdjust="spacingAndGlyphs">1800</text><text transform="translate(17.2 434) rotate(-90)" font-size="9.9" fill="#8a8a90" textLength="19.4" lengthAdjust="spacingAndGlyphs">1750</text><text transform="translate(17.2 493) rotate(-90)" font-size="9.9" fill="#8a8a90" textLength="19.4" lengthAdjust="spacingAndGlyphs">1700</text><text transform="translate(17.2 552) rotate(-90)" font-size="9.9" fill="#8a8a90" textLength="19.4" lengthAdjust="spacingAndGlyphs">1650</text><text transform="translate(17.2 612) rotate(-90)" font-size="9.9" fill="#8a8a90" textLength="19.4" lengthAdjust="spacingAndGlyphs">1600</text><text transform="translate(17.2 671) rotate(-90)" font-size="9.9" fill="#8a8a90" textLength="19.4" lengthAdjust="spacingAndGlyphs">1550</text><text transform="translate(17.2 730) rotate(-90)" font-size="9.9" fill="#8a8a90" textLength="19.4" lengthAdjust="spacingAndGlyphs">1500</text><text transform="translate(17.2 789) rotate(-90)" font-size="9.9" fill="#8a8a90" textLength="19.4" lengthAdjust="spacingAndGlyphs">1450</text><text transform="translate(17.2 848) rotate(-90)" font-size="9.9" fill="#8a8a90" textLength="19.4" lengthAdjust="spacingAndGlyphs">1400</text><text transform="translate(17 929) rotate(-90)" font-size="10" fill="#85858c" textLength="39" lengthAdjust="spacingAndGlyphs">milimetry</text><path d="M196.5 42V57" stroke="#000" stroke-width="1" stroke-dasharray="3 3" shape-rendering="crispEdges"/><path d="M8 263.5H23" stroke="#000" stroke-width="1" stroke-dasharray="3 3" shape-rendering="crispEdges"/><path d="M12 48.5H15M16 48.5H18M20 48.5H22M14.5 46V48M14.5 50V52M14.5 54V56" stroke="#000" stroke-width="1" fill="none" shape-rendering="crispEdges"/><path d="M15.8 49.8L20 53.8" stroke="#000" stroke-width="1.1" fill="none"/><path d="M21.2 55.2V51.6L17.6 55.2Z" fill="#000"/>
<rect x="0" y="20" width="5" height="933" fill="#ececec"/><rect x="-1.5" y="23.5" width="4" height="22" fill="#fff" stroke="#a0a0a0" stroke-width="1"/><path d="M5.5 20V953" stroke="#d4d4d4" stroke-width="1" shape-rendering="crispEdges"/><rect x="0" y="39" width="1.4" height="5" fill="#000"/><rect x="0" y="67" width="1.4" height="5" fill="#000"/><rect x="0" y="95" width="1.4" height="5" fill="#000"/><rect x="0" y="123" width="1.4" height="5" fill="#000"/><rect x="0" y="151" width="1.4" height="5" fill="#000"/><rect x="0" y="207" width="1.4" height="5" fill="#000"/><rect x="0" y="235" width="1.4" height="5" fill="#000"/><rect x="0" y="263" width="1.4" height="5" fill="#000"/><rect x="0" y="291" width="1.4" height="5" fill="#000"/><rect x="0" y="319" width="1.4" height="5" fill="#000"/><rect x="0" y="347" width="1.4" height="5" fill="#000"/><rect x="0" y="375" width="1.4" height="5" fill="#000"/><rect x="0" y="431" width="1.4" height="5" fill="#000"/><rect x="0" y="459" width="1.4" height="5" fill="#000"/><rect x="0" y="487" width="1.4" height="5" fill="#000"/>
<rect x="1773" y="59" width="17" height="858" fill="#fff"/><rect x="1773" y="59" width="16" height="17" fill="#f2f2f2"/><path d="M1777.5 70L1781 66.5L1784.5 70" stroke="#505050" stroke-width="1.8" fill="none"/><rect x="1773" y="77" width="15" height="221.5" fill="#cdcdcd"/><rect x="1773" y="899" width="16" height="17" fill="#f2f2f2"/><path d="M1777.5 905L1781 908.5L1784.5 905" stroke="#505050" stroke-width="1.8" fill="none"/><rect x="25" y="917" width="1765" height="17" fill="#ececec"/><path d="M24 916.5H908" stroke="#a6a6a6" stroke-width="1" shape-rendering="crispEdges"/><rect x="908" y="916" width="865" height="16" fill="#fff"/><rect x="908" y="932" width="882" height="2" fill="#f2f2f2"/><path d="M907.5 917V933" stroke="#a0a0a0" stroke-width="1" shape-rendering="crispEdges"/><rect x="908" y="917" width="17" height="16" fill="#f2f2f2"/><path d="M918.5 921.5L915 925L918.5 928.5" stroke="#404040" stroke-width="1.8" fill="none"/><rect x="1072" y="917" width="619" height="15" fill="#cdcdcd"/><rect x="1755" y="917" width="17" height="16" fill="#f2f2f2"/><path d="M1761.6 921.3L1765.4 925L1761.6 928.7" stroke="#404040" stroke-width="1.8" fill="none"/><rect x="1772" y="916" width="18" height="18" fill="#fcfcfc"/><circle cx="1780" cy="923.9" r="4.4" fill="#fff" stroke="#2a2a4a" stroke-width="1.1"/><path d="M1783.3 927.2L1786.8 930.7" stroke="#2a2a4a" stroke-width="1.8"/><circle cx="1780" cy="923.9" r="1.9" fill="none" stroke="#4a4a6a" stroke-width="0.9"/><path d="M902.5 920V921M902.5 924V925M902.5 928V929" stroke="#b0b0b0" stroke-width="1.5"/><path d="M28.7 919H33.5L36.5 922V929.6H28.7Z" fill="#fff" stroke="#000" stroke-width="1.4" stroke-linejoin="miter"/><path d="M30.3 925.6H35M32.65 923.2V928" stroke="#000" stroke-width="1.4"/><path d="M168.7 919H173.5L176.5 922V929.6H168.7Z" fill="#fff" stroke="#000" stroke-width="1.4" stroke-linejoin="miter"/><path d="M170.3 925.6H175M172.65 923.2V928" stroke="#000" stroke-width="1.4"/><path d="M46.5 920V930" stroke="#8a8a8a" stroke-width="1.2"/><path d="M53 920V930L47.8 925Z" fill="#8a8a8a"/><path d="M70 920V930L64.8 925Z" fill="#8a8a8a"/><path d="M137 920V930L142.2 925Z" fill="#8a8a8a"/><path d="M152 920V930L157.2 925Z" fill="#8a8a8a"/><path d="M158.5 920V930" stroke="#8a8a8a" stroke-width="1.2"/><text x="92" y="930" font-size="12.5" fill="#111" textLength="21.5" lengthAdjust="spacingAndGlyphs">1 z 1</text><path d="M182.5 917V933" stroke="#a0a0a0" stroke-width="1" shape-rendering="crispEdges"/><path d="M183 917H249.5L256.5 924.5V933H183Z" fill="#fff"/><path d="M249.5 917L256.5 924.5V933" stroke="#8a8a8a" stroke-width="0.9" fill="none"/><text x="197.2" y="927.7" font-size="12" fill="#111" textLength="42" lengthAdjust="spacingAndGlyphs">Strona 1</text><path d="M6 934.5H1790" stroke="#cacaca" stroke-width="1" shape-rendering="crispEdges"/>
<rect x="6" y="935" width="1784" height="18" fill="#ececec"/><path d="M10.5 938V939M10.5 941V942M10.5 944V945M10.5 947V948" stroke="#b5b5b5" stroke-width="1.5"/><path d="M18.5 939.5L23.5 944L18.5 948.5Z" fill="#000"/><path d="M30.5 950L31.5 946.5L37 941L39.5 943.5L34 949Z" fill="#6f8f96" stroke="#445" stroke-width="0.8"/><path d="M37 939.5L41 943.5M38.5 940.5L40.5 938.2Q42.6 937.6 42.5 940L40.3 942.3" fill="#223" stroke="#223" stroke-width="1.4"/><path d="M53 940L48.5 944.3L53 948.6" stroke="#c9c9d2" stroke-width="1.4" fill="none"/><rect x="60.5" y="935.5" width="16.5" height="17" fill="#fff" stroke="#333" stroke-width="1"/><path d="M61.5 936.5L76 951.5M76 936.5L61.5 951.5" stroke="#111" stroke-width="0.9"/><rect x="77.58" y="935.5" width="17" height="17" fill="#de2e1f" stroke="#4a4a4a" stroke-width="1"/><rect x="94.66" y="935.5" width="17" height="17" fill="#1a1b1b" stroke="#4a4a4a" stroke-width="1"/><rect x="111.74" y="935.5" width="17" height="17" fill="#7b6b64" stroke="#4a4a4a" stroke-width="1"/><rect x="128.82" y="935.5" width="17" height="17" fill="#00a75c" stroke="#4a4a4a" stroke-width="1"/><rect x="145.9" y="935.5" width="17" height="17" fill="#3e2f93" stroke="#4a4a4a" stroke-width="1"/><rect x="162.98" y="935.5" width="17" height="17" fill="#1a1b1b" stroke="#4a4a4a" stroke-width="1"/><rect x="180.06" y="935.5" width="17" height="17" fill="#ececec" stroke="#4a4a4a" stroke-width="1"/><rect x="197.14" y="935.5" width="17" height="17" fill="#f07e00" stroke="#4a4a4a" stroke-width="1"/><rect x="214.22" y="935.5" width="17" height="17" fill="#ffffff" stroke="#4a4a4a" stroke-width="1"/><rect x="231.3" y="935.5" width="17" height="17" fill="#e5097f" stroke="#4a4a4a" stroke-width="1"/><rect x="248.38" y="935.5" width="17" height="17" fill="#ffb8be" stroke="#4a4a4a" stroke-width="1"/><rect x="265.46" y="935.5" width="17" height="17" fill="#333332" stroke="#4a4a4a" stroke-width="1"/><path d="M1753.3 938.8L1759.6 943.4L1753.3 948" stroke="#cdcdd4" stroke-width="2" fill="none"/><path d="M1771 940.8L1774 943.9L1771 947M1775 940.8L1778 943.9L1775 947" stroke="#bcbccc" stroke-width="1.1" fill="none"/><path d="M0 953.5H1833" stroke="#cacaca" stroke-width="1" shape-rendering="crispEdges"/>
<rect x="1790" y="20" width="5" height="933" fill="#fff"/><path d="M1792.5 22V953" stroke="#c8c8c8" stroke-width="1" shape-rendering="crispEdges"/><rect x="1795" y="20" width="19" height="933" fill="#e1e1e1"/><rect x="1795" y="39" width="19" height="149.5" fill="#cde4fa"/><path d="M1800 25L1808 33M1808 25L1800 33" stroke="#9a9a9a" stroke-width="1.2" fill="none"/><path d="M1803 45.5H1810.5V57.5H1798.5V50Z" fill="#fff"/><rect x="1798.5" y="51.5" width="12" height="6" fill="#e0e0ec"/><path d="M1803 45.5H1810.5V57.5H1798.5V50L1803 45.5" fill="none" stroke="#2a2a4a" stroke-width="1"/><path d="M1798 45.5H1799M1800 45.5H1801M1798.5 47V48" stroke="#2a2a4a" stroke-width="1" fill="none"/><text transform="translate(1800.2 63) rotate(90)" font-size="12" fill="#111" textLength="108" lengthAdjust="spacingAndGlyphs">Wyokrąglenie/Wyż...</text><circle cx="1804.8" cy="215" r="8" fill="none" stroke="#c4c4c4" stroke-width="1"/><path d="M1804.8 209.5V220.5M1799.3 215H1810.3" stroke="#c2c2c2" stroke-width="2.2"/><path d="M1814.5 20V953" stroke="#d4d4d4" stroke-width="1" shape-rendering="crispEdges"/><rect x="1815" y="20" width="18" height="933" fill="#ececec"/><path d="M1818 25.5H1820M1822 25.5H1824M1826 25.5H1828" stroke="#aaa" stroke-width="1" shape-rendering="crispEdges"/><path d="M1821 30L1826.5 34.7L1821 39.4Z" fill="#000"/><path d="M1818 55.5L1819 52L1824.5 46.5L1827 49L1821.5 54.5ZM1825 45L1828.5 48.5M1826 46L1828 44Q1830 43.5 1830 46L1828 47.5" fill="#bdbdbd" stroke="#bdbdbd" stroke-width="1.2"/><path d="M1819.5 66.5L1824 62L1828.5 66.5" stroke="#cfcfd6" stroke-width="1.5" fill="none"/><rect x="1815.5" y="74.5" width="17" height="16.5" fill="#fff" stroke="#333" stroke-width="1"/><path d="M1816.5 75.5L1831.5 90M1831.5 75.5L1816.5 90" stroke="#111" stroke-width="0.9"/><rect x="1815.5" y="91.5" width="17" height="17" fill="#1a1b1b" stroke="#4a4a4a" stroke-width="1"/><rect x="1815.5" y="108.5" width="17" height="17" fill="#333332" stroke="#4a4a4a" stroke-width="1"/><rect x="1815.5" y="125.5" width="17" height="17" fill="#4d4d4d" stroke="#4a4a4a" stroke-width="1"/><rect x="1815.5" y="142.5" width="17" height="17" fill="#666665" stroke="#4a4a4a" stroke-width="1"/><rect x="1815.5" y="159.5" width="17" height="17" fill="#808080" stroke="#4a4a4a" stroke-width="1"/><rect x="1815.5" y="176.5" width="17" height="17" fill="#999999" stroke="#4a4a4a" stroke-width="1"/><rect x="1815.5" y="193.5" width="17" height="17" fill="#b3b3b3" stroke="#4a4a4a" stroke-width="1"/><rect x="1815.5" y="210.5" width="17" height="17" fill="#c6c7c7" stroke="#4a4a4a" stroke-width="1"/><rect x="1815.5" y="227.5" width="17" height="17" fill="#d9dada" stroke="#4a4a4a" stroke-width="1"/><rect x="1815.5" y="244.5" width="17" height="17" fill="#ececec" stroke="#4a4a4a" stroke-width="1"/><rect x="1815.5" y="261.5" width="17" height="17" fill="#ffffff" stroke="#4a4a4a" stroke-width="1"/><rect x="1815.5" y="278.5" width="17" height="17" fill="#3e2f93" stroke="#4a4a4a" stroke-width="1"/><rect x="1815.5" y="295.5" width="17" height="17" fill="#00a0d6" stroke="#4a4a4a" stroke-width="1"/><rect x="1815.5" y="312.5" width="17" height="17" fill="#00a75c" stroke="#ffffff" stroke-width="1"/><rect x="1815.5" y="329.5" width="17" height="17" fill="#fbdf14" stroke="#4a4a4a" stroke-width="1"/><rect x="1815.5" y="346.5" width="17" height="17" fill="#de2e1f" stroke="#4a4a4a" stroke-width="1"/><rect x="1815.5" y="363.5" width="17" height="17" fill="#e5097f" stroke="#4a4a4a" stroke-width="1"/><rect x="1815.5" y="380.5" width="17" height="17" fill="#a5488f" stroke="#4a4a4a" stroke-width="1"/><rect x="1815.5" y="397.5" width="17" height="17" fill="#f07e00" stroke="#4a4a4a" stroke-width="1"/><rect x="1815.5" y="414.5" width="17" height="17" fill="#ffb8be" stroke="#4a4a4a" stroke-width="1"/><rect x="1815.5" y="431.5" width="17" height="17" fill="#7b6b64" stroke="#4a4a4a" stroke-width="1"/><rect x="1815.5" y="448.5" width="17" height="17" fill="#d9d3f0" stroke="#4a4a4a" stroke-width="1"/><rect x="1815.5" y="465.5" width="17" height="17" fill="#b1a4e0" stroke="#4a4a4a" stroke-width="1"/><rect x="1815.5" y="482.5" width="17" height="17" fill="#7a96d3" stroke="#4a4a4a" stroke-width="1"/><rect x="1815.5" y="499.5" width="17" height="17" fill="#8b73c7" stroke="#4a4a4a" stroke-width="1"/><rect x="1815.5" y="516.5" width="17" height="17" fill="#948db8" stroke="#4a4a4a" stroke-width="1"/><rect x="1815.5" y="533.5" width="17" height="17" fill="#52638f" stroke="#4a4a4a" stroke-width="1"/><rect x="1815.5" y="550.5" width="17" height="17" fill="#56506e" stroke="#4a4a4a" stroke-width="1"/><rect x="1815.5" y="567.5" width="17" height="17" fill="#72859f" stroke="#4a4a4a" stroke-width="1"/><rect x="1815.5" y="584.5" width="17" height="17" fill="#0090cf" stroke="#4a4a4a" stroke-width="1"/><rect x="1815.5" y="601.5" width="17" height="17" fill="#aedaf0" stroke="#4a4a4a" stroke-width="1"/><rect x="1815.5" y="618.5" width="17" height="17" fill="#b9c9d4" stroke="#4a4a4a" stroke-width="1"/><rect x="1815.5" y="635.5" width="17" height="17" fill="#94a3ab" stroke="#4a4a4a" stroke-width="1"/><rect x="1815.5" y="652.5" width="17" height="17" fill="#6b7680" stroke="#4a4a4a" stroke-width="1"/><rect x="1815.5" y="669.5" width="17" height="17" fill="#3f484a" stroke="#4a4a4a" stroke-width="1"/><rect x="1815.5" y="686.5" width="17" height="17" fill="#54706b" stroke="#4a4a4a" stroke-width="1"/><rect x="1815.5" y="703.5" width="17" height="17" fill="#4d8a7a" stroke="#4a4a4a" stroke-width="1"/><rect x="1815.5" y="720.5" width="17" height="17" fill="#759894" stroke="#4a4a4a" stroke-width="1"/><rect x="1815.5" y="737.5" width="17" height="17" fill="#62b3a0" stroke="#4a4a4a" stroke-width="1"/><rect x="1815.5" y="754.5" width="17" height="17" fill="#63a87b" stroke="#4a4a4a" stroke-width="1"/><rect x="1815.5" y="771.5" width="17" height="17" fill="#7dd5df" stroke="#4a4a4a" stroke-width="1"/><rect x="1815.5" y="788.5" width="17" height="17" fill="#63b0bd" stroke="#4a4a4a" stroke-width="1"/><rect x="1815.5" y="805.5" width="17" height="17" fill="#b8c9ba" stroke="#4a4a4a" stroke-width="1"/><rect x="1815.5" y="822.5" width="17" height="17" fill="#ddfadd" stroke="#4a4a4a" stroke-width="1"/><rect x="1815.5" y="839.5" width="17" height="17" fill="#b4f0bd" stroke="#4a4a4a" stroke-width="1"/><rect x="1815.5" y="856.5" width="17" height="17" fill="#93a094" stroke="#4a4a4a" stroke-width="1"/><rect x="1815.5" y="873.5" width="17" height="17" fill="#929b78" stroke="#4a4a4a" stroke-width="1"/><rect x="1815.5" y="890.5" width="17" height="17" fill="#bfc377" stroke="#4a4a4a" stroke-width="1"/><rect x="1815" y="908" width="18" height="4" fill="#bfd090"/><path d="M1815.5 908v4M1832.5 908v4" stroke="#4a4a4a" stroke-width="1"/><rect x="1815.5" y="312.5" width="17" height="17" fill="none" stroke="#fff" stroke-width="1"/><path d="M1819.3 916.8L1823.6 921.6L1828 916.8" stroke="#b2b2bc" stroke-width="1.8" fill="none"/><path d="M1820.3 934.3L1823.7 937.5L1820.3 940.7M1824.6 934.3L1828 937.5L1824.6 940.7" stroke="#b4b4c0" stroke-width="1.3" fill="none"/>
<text x="-1.5" y="975.2" font-size="12" fill="#111" textLength="87.5" lengthAdjust="spacingAndGlyphs">5,434; 1 888,293 )</text><rect x="96.5" y="963.5" width="13.5" height="13" fill="#fff" stroke="#000" stroke-width="1"/><path d="M101 966L106.5 970L101 974Z" fill="#000"/><rect x="1380" y="963.6" width="13.3" height="12" rx="1.2" fill="#e9e9f4" stroke="#6c6c96" stroke-width="1"/><rect x="1381.3" y="964.8" width="10.7" height="3.1" fill="#c98c8c"/><rect x="1381.3" y="967.9" width="10.7" height="2.8" fill="#5f8f5f"/><rect x="1381.3" y="970.7" width="10.7" height="3.7" fill="#8eaad8"/><circle cx="1386.5" cy="969.5" r="2.6" fill="#fff" stroke="#1e1e3c" stroke-width="1.4"/><path d="M1382.2 977.4H1391" stroke="#6c6c96" stroke-width="1"/><path d="M1413.4 964.6L1420 971.6L1414.1 977.5L1408.3 971.6Z" fill="#fff" stroke="#5a5a7a" stroke-width="1.3" stroke-linejoin="round"/><path d="M1409.2 972.2H1419.4L1414.1 977.3Z" fill="#f07e00"/><path d="M1413 963L1416.5 965.5M1416.5 963L1414 965.3M1416.3 964.5L1416 969.5" stroke="#5a5a7a" stroke-width="1" fill="none"/><circle cx="1416" cy="970" r="0.9" fill="#5a5a7a"/><path d="M1420 970.3Q1422.6 970.3 1422.4 975.6" stroke="#f07e00" stroke-width="1.5" fill="none"/><rect x="1429.9" y="961.8" width="16.4" height="16.4" fill="#fff" stroke="#8c8c8c" stroke-width="1"/><path d="M1430.2 962.2L1446 977.9M1446 962.2L1430.2 977.9" stroke="#111" stroke-width="1"/><text x="1450.4" y="975.2" font-size="12" fill="#111" textLength="22.6" lengthAdjust="spacingAndGlyphs">Brak</text><path d="M1611.5 959V980" stroke="#d0d0d0" stroke-width="1" shape-rendering="crispEdges"/><path d="M1625 963.3L1628.4 970.8L1626.9 975.3H1623.1L1621.6 970.8Z" fill="#f6f6ff" stroke="#3a3a5a" stroke-width="1" stroke-linejoin="round"/><path d="M1625 966.5V971.5" stroke="#3a3a5a" stroke-width="0.9"/><circle cx="1625" cy="972" r="0.9" fill="#3a3a5a"/><rect x="1621.3" y="976.2" width="7.4" height="1.8" fill="#2a2a4a"/><rect x="1638.5" y="962" width="16.5" height="16.5" fill="#1a1b1b" stroke="#777" stroke-width="1"/><text x="1659.4" y="975.2" font-size="12" fill="#111" textLength="89.3" lengthAdjust="spacingAndGlyphs">C:0 M:0 Y:0 K:100</text><text x="1755" y="975.2" font-size="12" fill="#111" textLength="51.3" lengthAdjust="spacingAndGlyphs">0,176 mm</text>
</svg>
</body></html>
